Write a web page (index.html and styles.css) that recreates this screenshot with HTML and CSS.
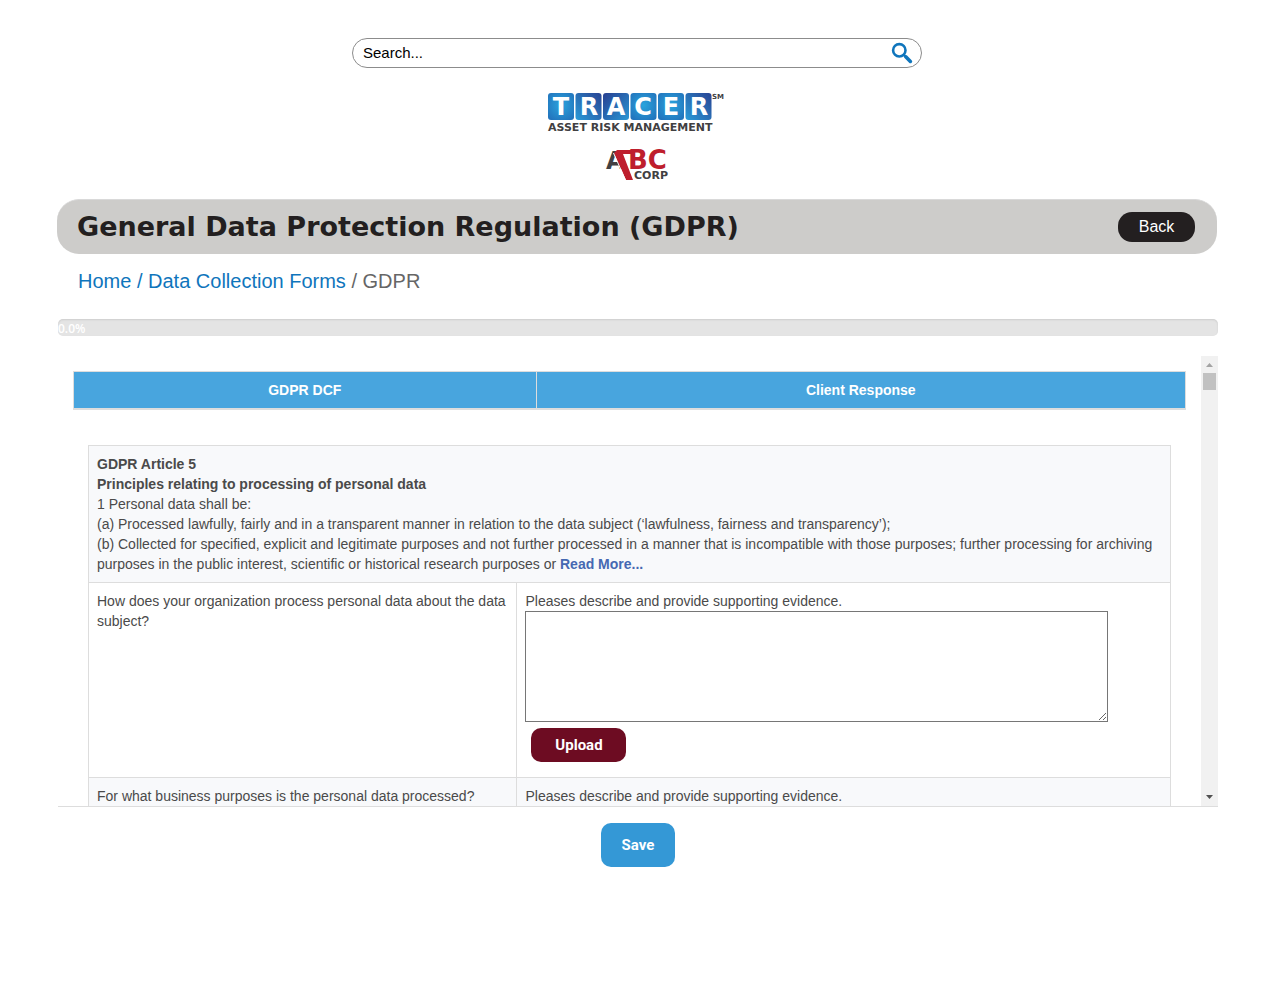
FILE: index.html
```html
<!DOCTYPE html>
<html lang="en">
<head>
<meta charset="utf-8">
<title>General Data Protection Regulation (GDPR)</title>
<meta name="viewport" content="width=device-width, initial-scale=1">
<link rel="stylesheet" href="styles.css">
</head>
<body>
<header class="site-header">
  <form class="search" role="search">
    <input class="search-input" type="text" value="Search..." aria-label="Search">
    <button class="search-button" type="button" aria-label="Search">
      <svg width="22" height="22" viewBox="0 0 22 22" fill="none" stroke="#0f75bc" aria-hidden="true">
        <circle cx="8.3" cy="8.3" r="6.2" stroke-width="2.6"/>
        <path d="M12.8 12.8l2 2" stroke-width="2.6"/>
        <path d="M14.8 14.8l4.600 4.600" stroke-width="3.600" stroke-linecap="round"/>
      </svg>
    </button>
  </form>
  <svg class="tracer" width="180" height="42" viewBox="0 0 180 42" role="img" aria-label="Tracer Asset Risk Management">
    <defs>
      <radialGradient id="light" cx=".5" cy=".45" r=".75"><stop offset="0" stop-color="#2aa4dd"/><stop offset="1" stop-color="#216db8"/></radialGradient>
      <linearGradient id="down" x1="0" y1="0" x2="1" y2="1"><stop offset="0" stop-color="#283f91"/><stop offset="1" stop-color="#2997d5"/></linearGradient>
      <linearGradient id="up" x1="0" y1="1" x2="1" y2="0"><stop offset="0" stop-color="#2a9bd8"/><stop offset="1" stop-color="#294393"/></linearGradient>
    </defs>
    <rect x="1" y="1" width="26" height="27" rx="3" fill="url(#light)"/>
    <rect x="28.500" y="1" width="26" height="27" rx="3" fill="url(#up)"/>
    <rect x="56" y="1" width="26" height="27" rx="3" fill="url(#down)"/>
    <rect x="83.500" y="1" width="26" height="27" rx="3" fill="url(#light)"/>
    <rect x="111" y="1" width="26" height="27" rx="3" fill="url(#light)"/>
    <rect x="138.500" y="1" width="26" height="27" rx="3" fill="url(#up)"/>
    <g class="tracer-letters">
      <text x="14" y="23">T</text><text x="42" y="23">R</text><text x="69" y="23">A</text>
      <text x="96" y="23">C</text><text x="124" y="23">E</text><text x="152" y="23">R</text>
    </g>
    <text class="tracer-mark" x="165" y="7">SM</text>
    <text class="tracer-tag" x="1" y="39">ASSET RISK MANAGEMENT</text>
  </svg>
  <svg class="abc" width="62" height="32" viewBox="0 0 62 32" role="img" aria-label="ABC Corp">
    <text class="abc-a" x="0" y="20">A</text>
    <text class="abc-bc" x="22" y="20">BC</text>
    <path d="M11 1h17v4H17l10 26h-7L8 4z" fill="#be1e2d"/>
    <path d="M7.500 4l12 27" stroke="#fff" stroke-width="1" fill="none"/>
    <text class="abc-corp" x="28" y="30">CORP</text>
  </svg>
</header>

<section class="title-bar">
  <h1 class="title">General Data Protection Regulation (GDPR)</h1>
  <button class="back" type="button">Back</button>
</section>

<main class="content">
  <nav class="crumbs" aria-label="Breadcrumb"><a href="#">Home</a><a href="#"> / Data Collection Forms</a> / GDPR</nav>
  <div class="progress" role="progressbar" aria-label="Progress" aria-valuenow="0" aria-valuemin="0" aria-valuemax="100">0.0%</div>

  <div class="panel">
    <div class="panel-body">
      <table class="table head-table">
        <thead><tr><th class="head-first">GDPR DCF</th><th>Client Response</th></tr></thead>
      </table>
      <div class="questions">
        <table class="table">
          <tbody>
            <tr class="shaded">
              <td colspan="2"><strong>GDPR Article 5</strong><br><strong>Principles relating to processing of personal data</strong><br>1 Personal data shall be:<br>(a) Processed lawfully, fairly and in a transparent manner in relation to the data subject (‘lawfulness, fairness and transparency’);<br>(b) Collected for specified, explicit and legitimate purposes and not further processed in a manner that is incompatible with those purposes; further processing for archiving purposes in the public interest, scientific or historical research purposes or <a class="more" href="#">Read More...</a></td>
            </tr>
            <tr>
              <td class="question">How does your organization process personal data about the data subject?</td>
              <td>
                <label for="answer-process">Pleases describe and provide supporting evidence.</label>
                <textarea class="answer" id="answer-process"></textarea>
                <button class="upload" type="button">Upload</button>
              </td>
            </tr>
            <tr class="shaded">
              <td class="question">For what business purposes is the personal data processed?</td>
              <td>
                <label for="answer-purpose">Pleases describe and provide supporting evidence.</label>
                <textarea class="answer" id="answer-purpose"></textarea>
              </td>
            </tr>
          </tbody>
        </table>
      </div>
    </div>
    <div class="scrollbar" aria-hidden="true">
      <svg width="17" height="17" viewBox="0 0 17 17"><path d="M5 11h7L8.500 7z" fill="#a3a3a3"/></svg>
      <div class="thumb"></div>
      <svg class="scroll-down" width="17" height="17" viewBox="0 0 17 17"><path d="M5 6h7L8.500 10z" fill="#505050"/></svg>
    </div>
  </div>
  <div class="actions"><button class="save" type="button">Save</button></div>
</main>
</body>
</html>
```
FILE: styles.css
```css
* { box-sizing: border-box; }

body {
  margin: 0;
  background: #fff;
  color: #4a4a4a;
  font: 14px/20px "Liberation Sans", Arial, sans-serif;
}

button { border: 0; font-family: inherit; cursor: pointer; }

a { color: #0f75bc; text-decoration: none; }

.site-header {
  display: flex;
  flex-direction: column;
  align-items: center;
  padding: 38px 16px 18px;
}

.search {
  display: flex;
  align-items: center;
  width: 100%;
  max-width: 570px;
  height: 30px;
  padding: 0 8px 0 10px;
  border: 1px solid #8c8c8c;
  border-radius: 15px;
}

.search-input {
  flex: 1;
  min-width: 0;
  padding: 0;
  border: 0;
  outline: 0;
  background: none;
  color: #000;
  font: 15px/20px "Liberation Sans", Arial, sans-serif;
}

.search-button {
  display: flex;
  padding: 0;
  background: none;
}

.tracer {
  margin: 24px 0 15px;
  overflow: visible;
}

.abc { overflow: visible; }

.tracer-letters {
  fill: #fff;
  font: bold 24px "DejaVu Sans", sans-serif;
  text-anchor: middle;
}

.tracer-mark {
  fill: #414042;
  font: bold 7px "DejaVu Sans", sans-serif;
}

.tracer-tag {
  fill: #414042;
  font: bold 11px "DejaVu Sans", sans-serif;
}

.abc-a {
  fill: #414042;
  font: bold 24px "DejaVu Sans", sans-serif;
}

.abc-bc {
  fill: #be1e2d;
  font: bold 26px "DejaVu Sans", sans-serif;
}

.abc-corp {
  fill: #414042;
  font: bold 11px "DejaVu Sans", sans-serif;
}

.title-bar {
  display: flex;
  align-items: center;
  justify-content: space-between;
  gap: 16px;
  min-height: 55px;
  margin: 0 57px;
  padding: 0 22px 0 20px;
  border-top: 1px solid #d9d9d9;
  border-radius: 22px;
  background: #cdccca;
}

.title {
  margin: 0;
  color: #231f20;
  font: bold 27px/32px "DejaVu Sans", sans-serif;
}

.back {
  width: 77px;
  height: 30px;
  border-radius: 14px;
  background: #231f20;
  color: #fff;
  font-size: 16px;
}

.content { padding: 0 56px 0 58px; }

.crumbs {
  padding: 15px 20px 26px;
  color: #666;
  font-size: 20px;
  line-height: 24px;
  white-space: pre-wrap;
}

.progress {
  height: 17px;
  border-radius: 5px;
  background: #e4e4e4;
  box-shadow: inset 0 1px 2px rgba(0, 0, 0, 0.1);
  color: #fff;
  font: 600 12px/20px "Open Sans", sans-serif;
}

.panel {
  display: flex;
  height: 451px;
  margin-top: 20px;
  border-bottom: 1px solid #ddd;
}

.panel-body {
  flex: 1;
  min-width: 0;
  padding: 15px;
  overflow-y: auto;
  scrollbar-width: none;
}

.table {
  width: 100%;
  border-collapse: collapse;
}

.table th,
.table td {
  padding: 8px;
  border: 1px solid #ddd;
  vertical-align: top;
}

.head-table th {
  border-bottom-width: 2px;
  background: #48a5de;
  color: #fff;
}

.table .head-first { width: 41.6%; }

.questions { padding: 35px 15px 0; }

.shaded { background: #f8f9fb; }

.table .question { width: 39.6%; }

.more { color: #4568b2; font-weight: bold; }

.answer {
  display: block;
  width: 91.5%;
  height: 111px;
  border: 1px solid #767676;
  background: #fff;
}

.upload {
  display: block;
  width: 95px;
  height: 34px;
  margin: 6px 6px 7px;
  border-radius: 10px;
  background: #6d0c22;
  color: #fff;
  font: bold 15px/20px Roboto, sans-serif;
}

.scrollbar {
  display: flex;
  flex-direction: column;
  width: 17px;
  background: #f1f1f1;
}

.thumb {
  height: 17px;
  margin: 0 2px;
  background: #c1c1c1;
}

.scroll-down { margin-top: auto; }

.actions {
  display: flex;
  justify-content: center;
  padding: 16px 0;
}

.save {
  width: 74px;
  height: 44px;
  border-radius: 10px;
  background: #3498d6;
  color: #fff;
  font: bold 15px/20px Roboto, sans-serif;
}
```
